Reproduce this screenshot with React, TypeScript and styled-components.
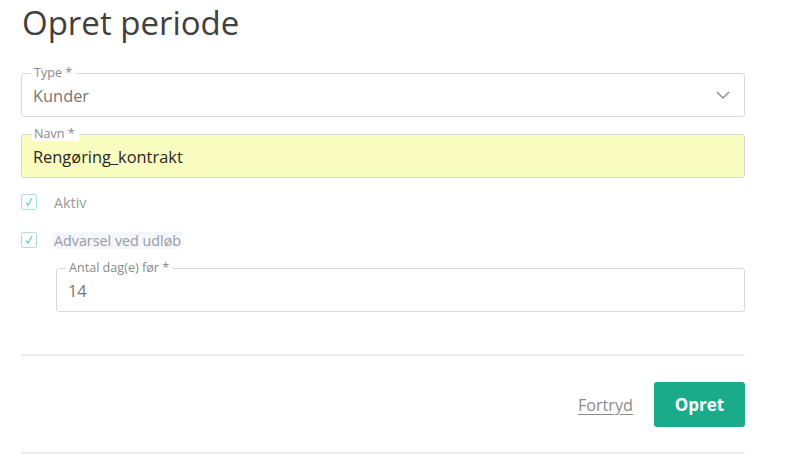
import React from "react";
import styled, { createGlobalStyle } from "styled-components";

const Global = createGlobalStyle`
  html, body { margin: 0; padding: 0; background: #fff; }
  body { font-family: "Open Sans", "Noto Sans", sans-serif; }
`;

const Page = styled.div`
  width: 724px;
  padding: 0 55px 0 21px;
  display: flex;
  flex-direction: column;
`;

const Title = styled.h1`
  margin: 0;
  padding: 0 0 0 1px;
  height: 73px;
  font-size: 33px;
  line-height: 46px;
  font-weight: 400;
  color: #404040;
`;

const Field = styled.div<{ $indent?: number; $gap?: number }>`
  position: relative;
  margin-left: ${(p) => p.$indent ?? 0}px;
  margin-top: ${(p) => p.$gap ?? 0}px;
`;

const FieldLabel = styled.span`
  position: absolute;
  top: -8px;
  left: 10px;
  padding: 0 4px 0 3px;
  background: #fff;
  font-size: 12.6px;
  line-height: 15px;
  color: #8a8a8a;
`;

const Box = styled.div<{ $highlight?: boolean; $strong?: boolean }>`
  box-sizing: border-box;
  height: 44px;
  border: 1px solid #d4dada;
  border-radius: 3px;
  background: ${(p) => (p.$highlight ? "#fafdc0" : "#fff")};
  display: flex;
  align-items: center;
  padding: 0 14px 0 11px;
  font-size: 16.4px;
  color: ${(p) => (p.$strong ? "#262626" : "#777")};
`;

const Value = styled.span`
  flex: 1;
`;

const CheckRow = styled.label<{ $gap: number }>`
  display: flex;
  align-items: center;
  gap: 17px;
  margin-top: ${(p) => p.$gap}px;
  height: 16px;
`;

const CheckBox = styled.span`
  box-sizing: border-box;
  width: 16px;
  height: 16px;
  border: 1px solid #a9e2d6;
  border-radius: 2px;
  display: flex;
  align-items: center;
  justify-content: center;
`;

const CheckLabel = styled.span<{ $focus?: boolean }>`
  font-size: 14.3px;
  color: #9a9a9a;
  padding: 0 1px;
  line-height: 17px;
  background: ${(p) => (p.$focus ? "#f5f7ff" : "transparent")};
  margin-left: -1px;
`;

const Divider = styled.hr<{ $gap: number }>`
  border: none;
  height: 2px;
  background: #ececec;
  margin: ${(p) => p.$gap}px 0 0;
`;

const Actions = styled.div`
  display: flex;
  justify-content: flex-end;
  align-items: center;
  gap: 21px;
  margin-top: 26px;
  margin-bottom: 25px;
`;

const CancelLink = styled.a`
  font-size: 16.2px;
  color: #8c8c8c;
  text-decoration: underline;
  text-underline-offset: 3px;
  cursor: pointer;
`;

const PrimaryButton = styled.button`
  width: 91px;
  height: 45px;
  border: none;
  border-radius: 3px;
  background: #1aab8b;
  color: #fff;
  font-family: inherit;
  font-size: 17px;
  font-weight: 700;
  cursor: pointer;
`;

const Chevron = () => (
  <svg width="14" height="8" viewBox="0 0 14 8" fill="none">
    <path d="M1 1l6 6 6-6" stroke="#8a8a8a" strokeWidth="1.4" />
  </svg>
);

const Check = () => (
  <svg width="14" height="14" viewBox="0 0 14 14" fill="none">
    <path d="M4 7.6l2 2.6 4-7" stroke="#62c6b1" strokeWidth="1.1" />
  </svg>
);

export default function App() {
  return (
    <>
      <Global />
      <Page>
        <Title>Opret periode</Title>
        <Field>
          <FieldLabel>Type *</FieldLabel>
          <Box>
            <Value>Kunder</Value>
            <Chevron />
          </Box>
        </Field>
        <Field $gap={17}>
          <FieldLabel>Navn *</FieldLabel>
          <Box $highlight $strong>
            <Value>Rengøring_kontrakt</Value>
          </Box>
        </Field>
        <CheckRow $gap={16}>
          <CheckBox>
            <Check />
          </CheckBox>
          <CheckLabel>Aktiv</CheckLabel>
        </CheckRow>
        <CheckRow $gap={22}>
          <CheckBox>
            <Check />
          </CheckBox>
          <CheckLabel $focus>Advarsel ved udløb</CheckLabel>
        </CheckRow>
        <Field $indent={35} $gap={20}>
          <FieldLabel>Antal dag(e) før *</FieldLabel>
          <Box>
            <Value>14</Value>
          </Box>
        </Field>
        <Divider $gap={42} />
        <Actions>
          <CancelLink>Fortryd</CancelLink>
          <PrimaryButton>Opret</PrimaryButton>
        </Actions>
        <Divider $gap={0} />
      </Page>
    </>
  );
}
